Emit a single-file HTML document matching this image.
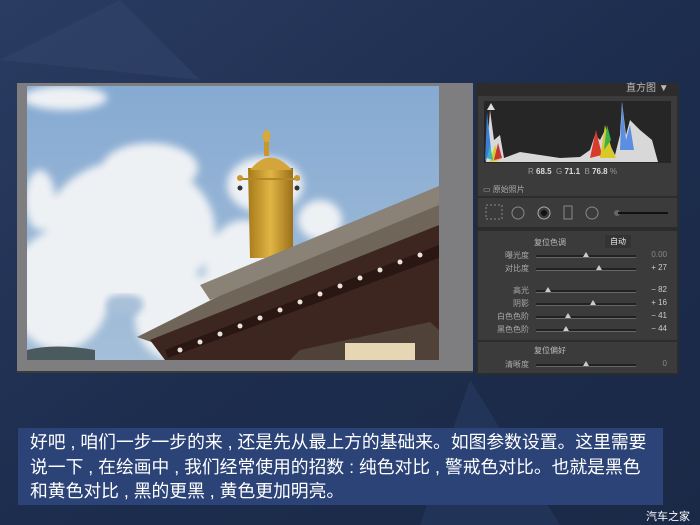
<!DOCTYPE html>
<html><head><meta charset="utf-8"><style>
body{margin:0;width:700px;height:525px;overflow:hidden;background:#1f2f50;font-family:"Liberation Sans","Noto Sans CJK SC",sans-serif;position:relative}
.a{position:absolute}
.lab{position:absolute;font-size:8px;color:#aaa;text-align:right;width:60px}
.val{position:absolute;font-size:8px;color:#ccc;text-align:right;width:30px;left:637px}
.tr{position:absolute;left:536px;width:100px;height:2px;background:#222;border-bottom:1px solid #666}
.th{position:absolute;width:0;height:0;border-left:3px solid transparent;border-right:3px solid transparent;border-bottom:5px solid #ccc}
.ln{white-space:nowrap;display:block}
</style></head><body>
<svg class="a" style="left:0;top:0" width="700" height="525">
<defs>
<linearGradient id="bg" x1="0" y1="0" x2="1" y2="1"><stop offset="0" stop-color="#2a3c62"/><stop offset="0.5" stop-color="#1d2d4e"/><stop offset="1" stop-color="#1a2946"/></linearGradient>
<linearGradient id="sky" x1="0" y1="0" x2="0" y2="1"><stop offset="0" stop-color="#86aad2"/><stop offset="1" stop-color="#a5bfd9"/></linearGradient>
<linearGradient id="gold" x1="0" y1="0" x2="1" y2="0"><stop offset="0" stop-color="#a77a1a"/><stop offset="0.5" stop-color="#e0b545"/><stop offset="1" stop-color="#9b6f18"/></linearGradient>
<filter id="bl"><feGaussianBlur stdDeviation="4"/></filter>
<clipPath id="ph"><rect x="27" y="86" width="412" height="274"/></clipPath>
</defs>
<rect width="700" height="525" fill="url(#bg)"/>
<path d="M120 0 L200 80 L0 60 Z" fill="#33466c" opacity="0.5"/>
<path d="M470 380 L560 525 L420 525 Z" fill="#263a60" opacity="0.6"/>
<rect x="17" y="83" width="456" height="290" fill="#7e7e80"/>
<rect x="17" y="371" width="456" height="2" fill="#3a3a3a"/>
<rect x="27" y="86" width="412" height="274" fill="url(#sky)"/>
<g clip-path="url(#ph)">
<g fill="#eef1f4" filter="url(#bl)">
<ellipse cx="65" cy="98" rx="42" ry="12"/>
<ellipse cx="130" cy="230" rx="85" ry="70"/>
<ellipse cx="60" cy="290" rx="50" ry="60"/>
<ellipse cx="190" cy="320" rx="55" ry="45"/>
<ellipse cx="245" cy="270" rx="40" ry="50"/>
<ellipse cx="265" cy="185" rx="38" ry="28"/>
<ellipse cx="320" cy="220" rx="22" ry="20"/>
<ellipse cx="150" cy="168" rx="48" ry="25"/>
<ellipse cx="40" cy="200" rx="15" ry="30"/>
</g>
<ellipse cx="125" cy="305" rx="18" ry="10" fill="#a8c0d8" filter="url(#bl)"/>
</g>
<path d="M27 350 Q55 343 95 350 L95 360 L27 360Z" fill="#4b5a5e"/>
<path d="M248 168 L293 168 L293 258 L250 258Z" fill="url(#gold)"/>
<path d="M250 170 Q270 145 292 170Z" fill="#d4a53a"/>
<rect x="264" y="138" width="5" height="18" fill="#c9982c"/>
<ellipse cx="266.5" cy="136" rx="4" ry="6" fill="#d8aa3b"/>
<rect x="240" y="178" width="60" height="2" fill="#b38628"/>
<circle cx="240" cy="178" r="3" fill="#c9982c"/><circle cx="297" cy="178" r="3" fill="#c9982c"/>
<circle cx="240" cy="188" r="2.5" fill="#333"/><circle cx="297" cy="188" r="2.5" fill="#333"/>
<path d="M137 337 L439 186 L439 225 L160 345Z" fill="#6f6558"/>
<path d="M200 285 L439 186 L439 205 L210 300Z" fill="#8a8276"/>
<path d="M150 340 L439 225 L439 360 L165 360Z" fill="#3d2620"/>
<path d="M165 350 L439 245 L439 258 L168 358Z" fill="#2a1713"/>
<g fill="#e9e2d6">
<circle cx="180" cy="350" r="2.5"/><circle cx="200" cy="342" r="2.5"/><circle cx="220" cy="334" r="2.5"/><circle cx="240" cy="326" r="2.5"/><circle cx="260" cy="318" r="2.5"/><circle cx="280" cy="310" r="2.5"/><circle cx="300" cy="302" r="2.5"/><circle cx="320" cy="294" r="2.5"/><circle cx="340" cy="286" r="2.5"/><circle cx="360" cy="278" r="2.5"/><circle cx="380" cy="270" r="2.5"/><circle cx="400" cy="262" r="2.5"/><circle cx="420" cy="255" r="2.5"/>
</g>
<path d="M300 350 L430 322 L439 330 L439 360 L290 360Z" fill="#504238"/>
<rect x="345" y="343" width="70" height="17" fill="#e6d6b4"/>
<rect x="476" y="83" width="203" height="292" fill="#2c2c2c"/>
<rect x="478" y="96" width="199" height="100" fill="#3b3b3b"/>
<rect x="484" y="101" width="187" height="62" fill="#262626"/>
<path d="M486 162 L490 110 L494 140 L500 135 L504 158 L520 152 L560 158 L580 157 L590 150 L595 135 L600 140 L605 130 L610 145 L615 155 L620 135 L622 102 L626 135 L630 120 L640 130 L652 140 L658 162Z" fill="#d8d8d8"/>
<path d="M590 158 L596 130 L602 155Z" fill="#d83a2c"/>
<path d="M600 158 L605 125 L612 150 L616 158Z" fill="#d7c928"/>
<path d="M604 150 L607 125 L611 140Z" fill="#3cb04a"/>
<path d="M620 150 L622 102 L626 140 L630 125 L634 150Z" fill="#5a8ee0"/>
<path d="M485 162 L487 112 L491 150Z" fill="#3b7ed6"/>
<path d="M490 162 L495 145 L500 160Z" fill="#d8c92a"/>
<path d="M494 160 L498 143 L502 158Z" fill="#c63333"/>
<path d="M487 158 L490 145 L493 160Z" fill="#3cb4b4"/>
<path d="M487 110 L491 103 L495 110Z" fill="#ddd"/>
<rect x="478" y="198" width="199" height="29" fill="#3b3b3b"/>
<rect x="478" y="231" width="199" height="109" fill="#3b3b3b"/>
<rect x="478" y="342" width="199" height="31" fill="#3b3b3b"/>
<g fill="none" stroke="#888" stroke-width="1">
<rect x="486" y="205" width="16" height="14" stroke-dasharray="2 2"/>
<circle cx="518" cy="213" r="6"/><circle cx="544" cy="213" r="6" stroke="#aaa"/>
<rect x="564" y="206" width="8" height="13"/><circle cx="592" cy="213" r="6"/>
</g>
<circle cx="544" cy="213" r="3" fill="#111"/>
<circle cx="617" cy="213" r="3" fill="#666"/>
<rect x="618" y="212" width="50" height="2" fill="#111"/>
</svg>
<div class="a" style="left:626px;top:79px;font-size:10px;color:#bbb">直方图 ▼</div>
<div class="a" style="left:528px;top:167px;font-size:8px;color:#999">R <b style="color:#ddd">68.5</b> &nbsp;G <b style="color:#ddd">71.1</b> &nbsp;B <b style="color:#ddd">76.8</b> %</div>
<div class="a" style="left:483px;top:184px;font-size:8px;color:#aaa">▭ 原始照片</div>
<div class="a" style="left:534px;top:237px;font-size:8px;color:#bbb">复位色调</div>
<div class="a" style="left:605px;top:235px;font-size:8px;color:#eee;background:#333;padding:1px 5px">自动</div>
<div class="lab" style="left:469px;top:250px">曝光度</div><div class="tr" style="top:255px"></div><div class="th" style="left:583px;top:252px"></div><div class="val" style="top:250px;color:#888">0.00</div>
<div class="lab" style="left:469px;top:263px">对比度</div><div class="tr" style="top:268px"></div><div class="th" style="left:596px;top:265px"></div><div class="val" style="top:263px">+ 27</div>
<div class="lab" style="left:469px;top:285px">高光</div><div class="tr" style="top:290px"></div><div class="th" style="left:545px;top:287px"></div><div class="val" style="top:285px">− 82</div>
<div class="lab" style="left:469px;top:298px">阴影</div><div class="tr" style="top:303px"></div><div class="th" style="left:590px;top:300px"></div><div class="val" style="top:298px">+ 16</div>
<div class="lab" style="left:469px;top:311px">白色色阶</div><div class="tr" style="top:316px"></div><div class="th" style="left:565px;top:313px"></div><div class="val" style="top:311px">− 41</div>
<div class="lab" style="left:469px;top:324px">黑色色阶</div><div class="tr" style="top:329px"></div><div class="th" style="left:563px;top:326px"></div><div class="val" style="top:324px">− 44</div>
<div class="a" style="left:534px;top:345px;font-size:8px;color:#bbb">复位偏好</div>
<div class="lab" style="left:469px;top:359px">清晰度</div><div class="tr" style="top:364px"></div><div class="th" style="left:583px;top:361px"></div><div class="val" style="top:359px;color:#888">0</div>
<div class="a" style="left:18px;top:428px;width:645px;height:77px;background:#2c4479;opacity:.95"></div>
<div class="a" style="left:30px;top:430px;width:640px;font-size:17.8px;line-height:24.5px;color:#fff">
<span class="ln">好吧 , 咱们一步一步的来 , 还是先从最上方的基础来。如图参数设置。这里需要</span>
<span class="ln">说一下 , 在绘画中 , 我们经常使用的招数 : 纯色对比 , 警戒色对比。也就是黑色</span>
<span class="ln">和黄色对比 , 黑的更黑 , 黄色更加明亮。</span>
</div>
<div class="a" style="left:646px;top:508px;font-size:11px;color:#fff">汽车之家</div>
</body></html>
